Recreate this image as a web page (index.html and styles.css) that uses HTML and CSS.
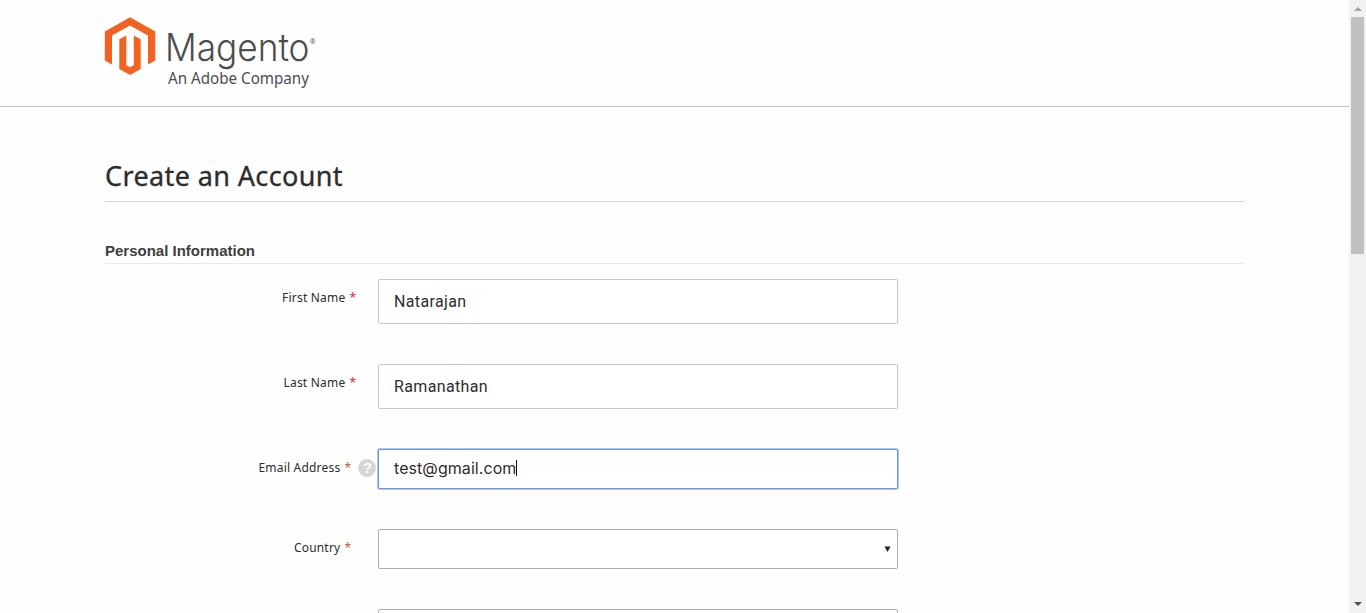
FILE: index.html
```html
<!DOCTYPE html>
<html lang="en">
<head>
<meta charset="utf-8">
<title>Create an Account</title>
<link rel="stylesheet" href="styles.css">
</head>
<body>
<div class="window">
  <div class="page">
    <header class="header">
      <svg class="logo" width="216" height="76" viewBox="104 14 216 76" role="img" aria-label="Magento">
        <path class="logo-mark" d="M130 17.2 155.3 31.6V60.6L148 64.6V35.6L130 25.4 112 35.6V64.6L104.8 60.6V31.6ZM119.3 39.2 126.3 35.5V65.2L130 67.2 133.8 65.2V35.5L140.7 39.2V69L130 75 119.3 69Z"/>
        <text class="logo-name" x="165" y="60.500" textLength="144.500" lengthAdjust="spacingAndGlyphs">Magento</text>
        <text class="logo-reg" x="309.800" y="43.500">®</text>
        <text class="logo-sub" x="168" y="83.500" textLength="141" lengthAdjust="spacingAndGlyphs">An Adobe Company</text>
      </svg>
    </header>
    <main class="content">
      <h1 class="title">Create an Account</h1>
      <h2 class="legend">Personal Information</h2>
      <form class="form">
        <div class="row">
          <label class="label"><span class="name">First Name</span><span class="star">*</span></label>
          <div class="field tall"><span class="value v-name">Natarajan</span></div>
        </div>
        <div class="row">
          <label class="label"><span class="name">Last Name</span><span class="star">*</span></label>
          <div class="field tall"><span class="value v-name">Ramanathan</span></div>
        </div>
        <div class="row">
          <label class="label with-help"><span class="name">Email Address</span><span class="star orange">*</span><span class="help">?</span></label>
          <div class="field focused"><span class="value v-email">test@gmail.com</span><span class="caret"></span></div>
        </div>
        <div class="row">
          <label class="label short"><span class="name">Country</span><span class="star orange">*</span></label>
          <div class="field select"><svg class="arrow" width="7" height="7" viewBox="0 0 7 7"><path d="M0.500 0.500H6.500L3.500 6Z"/></svg></div>
        </div>
        <div class="row">
          <div class="label"></div>
          <div class="field select"></div>
        </div>
      </form>
    </main>
  </div>
  <div class="scrollbar">
    <svg class="scroll-arrow up" width="8" height="4" viewBox="0 0 8 4"><path d="M0 4 4 0 8 4Z"/></svg>
    <div class="thumb"></div>
    <svg class="scroll-arrow down" width="8" height="4" viewBox="0 0 8 4"><path d="M0 0H8L4 4Z"/></svg>
  </div>
</div>
</body>
</html>
```

FILE: styles.css
```css
* { box-sizing: border-box; }
body { margin: 0; overflow: hidden; background: #fefefe; color: #2d2d2d; font-family: "Noto Sans", sans-serif; }
.window { display: flex; height: 613px; overflow: hidden; }
.page { flex: 1; }
.header { height: 107px; padding: 14px 0 0 104px; border-bottom: 1px solid #c8c3b4; }
.logo { display: block; }
.logo-mark { fill: #f26322; }
.logo-name { font: 300 38px Inter, sans-serif; fill: #4d4d4d; }
.logo-reg { font: 7px "Open Sans", sans-serif; fill: #4d4d4d; }
.logo-sub { font: 16px "Noto Sans", sans-serif; fill: #4d4d4d; }
.content { width: 1141px; margin-left: 104px; padding: 52px 0 0 1px; }
.title { height: 43px; margin: 0; border-bottom: 1px solid #d6d6d6; font-size: 27px; font-weight: 400; line-height: 33px; letter-spacing: 0.38px; white-space: nowrap; -webkit-text-stroke: 0.3px #2d2d2d; }
.legend { height: 62px; margin: 0 0 15px; padding-top: 39px; border-bottom: 1px solid #ebebeb; color: #404040; font: bold 15px/20px "Liberation Sans", Arial, sans-serif; }
.form { display: flex; flex-direction: column; gap: 40px; }
.row { display: flex; gap: 22px; }
.label { display: flex; justify-content: flex-end; width: 251px; padding-top: 10px; font-size: 12px; line-height: 18px; letter-spacing: 0.2px; white-space: nowrap; }
.label.short { padding-right: 5px; }
.with-help { width: 273px; margin-right: -22px; padding-right: 2px; }
.star { margin-left: 4px; color: #e02b27; letter-spacing: 0; }
.orange { color: #d2572b; }
.help { width: 18px; height: 18px; margin-left: 7px; padding-left: 1px; border-radius: 50%; background: #d6d6d6; color: #fff; font: bold 15px/18px "Liberation Sans", sans-serif; text-align: center; letter-spacing: 0; }
.field { display: flex; align-items: center; flex: none; width: 520px; height: 40px; padding: 0 15px; border: 1px solid #adadad; border-radius: 2px; background: #fff; }
.tall { height: 45px; border-color: #c7c7c7; }
.focused { border-color: #6e98e0; box-shadow: 0 0 0 1px #a3c5fb; padding-bottom: 2px; }
.value { font: 16px/20px Roboto, sans-serif; }
.v-name { letter-spacing: 0.35px; }
.v-email { font-family: Inter, sans-serif; letter-spacing: 0.07px; }
.caret { width: 1px; height: 16px; background: #111; }
.select { justify-content: flex-end; padding-right: 6px; }
.arrow { fill: #222; }
.scrollbar { display: flex; flex-direction: column; align-items: center; width: 17px; padding: 7px 0; background: #f1f1f1; }
.thumb { width: 13px; height: 237px; margin-top: 6px; background: #c1c1c1; }
.up { fill: #a3a3a3; }
.down { margin-top: auto; fill: #505050; }
```
